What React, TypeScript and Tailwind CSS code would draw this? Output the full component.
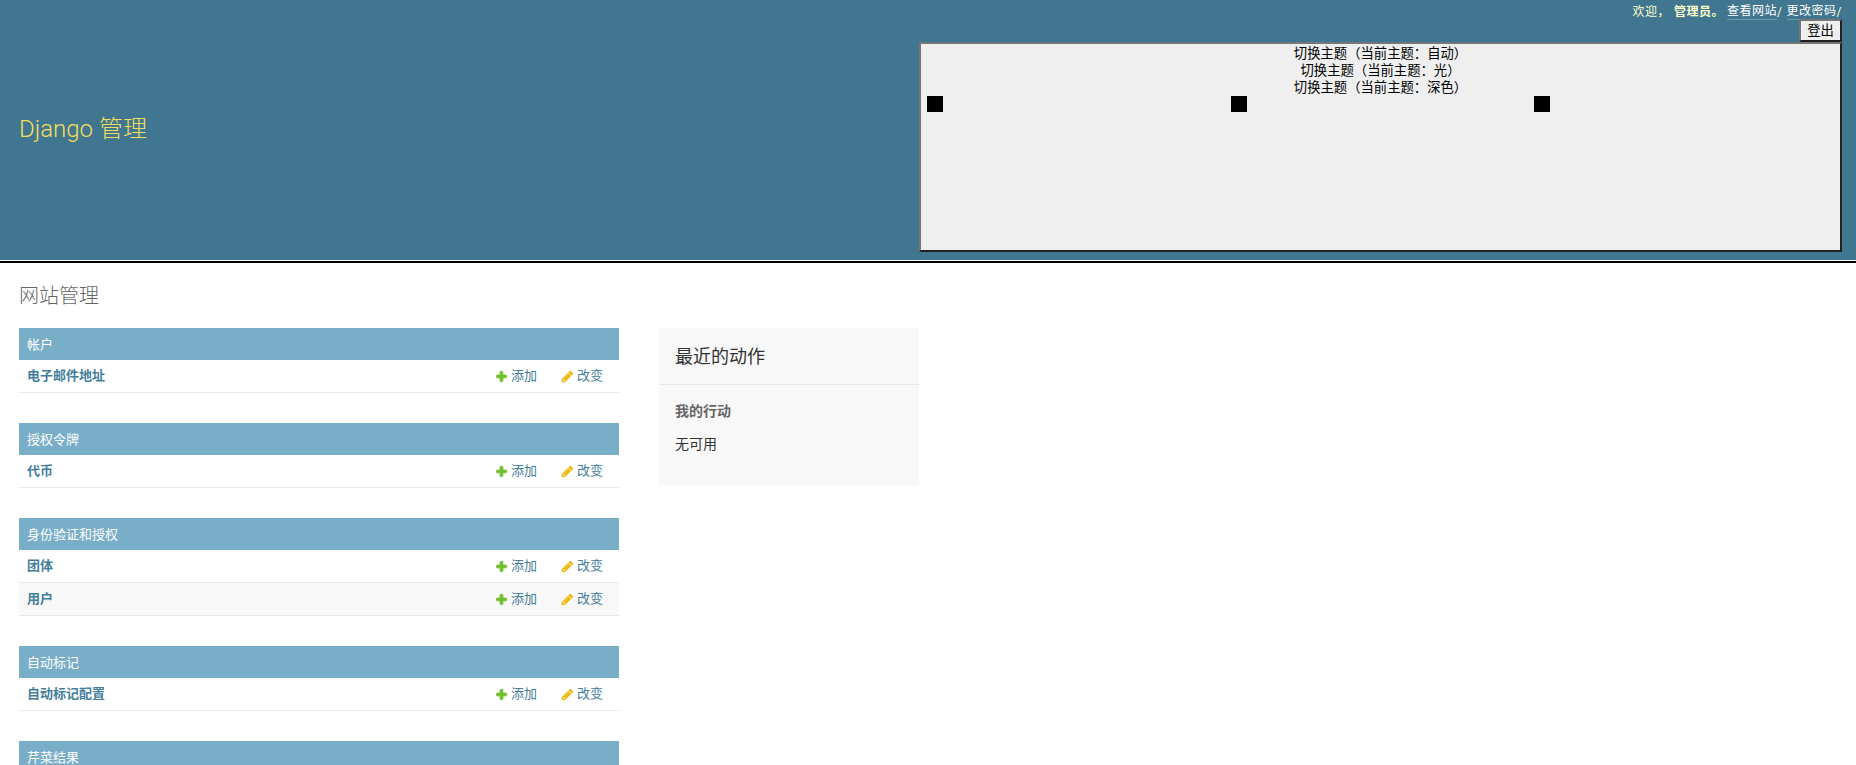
const AddIcon = () => (
  <svg width="13" height="13" viewBox="0 0 1792 1792" className="shrink-0">
    <path fill="#70bf2b" stroke="#70bf2b" strokeWidth="110" d="M1600 796v192q0 40-28 68t-68 28h-416v416q0 40-28 68t-68 28h-192q-40 0-68-28t-28-68v-416h-416q-40 0-68-28t-28-68v-192q0-40 28-68t68-28h416v-416q0-40 28-68t68-28h192q40 0 68 28t28 68v416h416q40 0 68 28t28 68z" />
  </svg>
)

const ChangeIcon = () => (
  <svg width="13" height="13" viewBox="0 0 1792 1792" className="shrink-0">
    <path fill="#efb80b" stroke="#efb80b" strokeWidth="40" d="M491 1536l91-91-235-235-91 91v107h128v128h107zm523-928q0-22-22-22-10 0-17 7l-542 542q-7 7-7 17 0 22 22 22 10 0 17-7l542-542q7-7 7-17zm-54-192l416 416-832 832h-416v-416zm683 96q0 53-37 90l-166 166-416-416 166-165q36-38 90-38 53 0 91 38l235 234q37 39 37 91z" />
  </svg>
)

const modules = [
  { title: '帐户', rows: ['电子邮件地址'] },
  { title: '授权令牌', rows: ['代币'] },
  { title: '身份验证和授权', rows: ['团体', '用户'] },
  { title: '自动标记', rows: ['自动标记配置'] },
  { title: '芹菜结果', rows: [] as string[] },
]

const themes = ['切换主题（当前主题：自动）', '切换主题（当前主题：光）', '切换主题（当前主题：深色）']

const App = () => {
  return (
    <div className="h-screen overflow-hidden bg-white font-['Roboto','Noto_Sans_CJK_SC',sans-serif] text-[14px] text-[#333]">
      <header className="flex h-[261px] items-center justify-between border-b border-white bg-[#417690] pr-[14px] pl-[19px]">
        <div className="pb-[2px] text-[24px] font-light text-[#f5dd5d]">Django 管理</div>
        <div className="flex h-full w-[923px] flex-col items-end pt-[3px] pb-[8px]">
          <div className="flex h-[16px] items-center pt-px text-[12px] leading-[16px] tracking-[0.5px] text-[#ffc]">
            <span>欢迎，</span>
            <strong className="ml-[4px] font-semibold">管理员</strong>
            <span className="mr-[3px] font-semibold">。</span>
            <a className="border-b border-white/25 leading-[15px] text-white">查看网站</a>
            <span className="mr-[4px]">/</span>
            <a className="border-b border-white/25 leading-[15px] text-white">更改密码</a>
            <span>/</span>
          </div>
          <button className="h-[23px] w-[43px] border-2 border-t-[#767676] border-r-[#212121] border-b-[#212121] border-l-[#767676] bg-[#efefef] text-[13.33px] leading-[17px] text-black">
            登出
          </button>
          <div className="flex w-full flex-1 flex-col border-2 border-t-[#767676] border-r-[#212121] border-b-[#212121] border-l-[#767676] bg-[#efefef] px-[6px] pt-px text-center text-[13.33px] leading-[17px] text-black">
            {themes.map((t) => (
              <div key={t}>{t}</div>
            ))}
            <div className="grid grid-cols-3 gap-x-[3.5px]">
              <div className="h-[16px] w-[16px] bg-black" />
              <div className="h-[16px] w-[16px] bg-black" />
              <div className="h-[16px] w-[16px] bg-black" />
            </div>
          </div>
        </div>
      </header>
      <div className="h-[2px] bg-black" />
      <main className="px-[19px] pt-[21px]">
        <h1 className="mb-[20px] text-[20px] leading-[24px] font-light text-[#666]">网站管理</h1>
        <div className="flex gap-[40px]">
          <div className="flex w-[600px] flex-col gap-[30px]">
            {modules.map((m) => (
              <section key={m.title}>
                <div className="flex h-[32px] items-center bg-[#79aec8] px-[8px] pt-px text-[13px] text-white">{m.title}</div>
                {m.rows.map((r, i) => (
                  <div key={r} className={`flex h-[33px] items-center border-b border-[#e8e8e8] pr-[15px] pl-[8px] text-[13px] text-[#447e9b] ${i % 2 === 1 ? 'bg-[#f8f8f8]' : ''}`}>
                    <span className="flex-1 font-bold">{r}</span>
                    <a className="flex w-[43px] items-center gap-[3px]">
                      <AddIcon />
                      添加
                    </a>
                    <a className="ml-[23px] flex w-[43px] items-center gap-[3px]">
                      <ChangeIcon />
                      改变
                    </a>
                  </div>
                ))}
              </section>
            ))}
          </div>
          <aside className="h-[157px] w-[260px] bg-[#f8f8f8]">
            <h2 className="flex h-[57px] items-center border-b border-[#e8e8e8] px-[16px] text-[18px] font-normal text-[#333]">最近的动作</h2>
            <div className="px-[16px]">
              <h3 className="mt-[16px] text-[14px] leading-[20px] font-bold text-[#666]">我的行动</h3>
              <p className="mt-[13px] text-[14px] leading-[20px] text-[#333]">无可用</p>
            </div>
          </aside>
        </div>
      </main>
    </div>
  )
}

export default App
